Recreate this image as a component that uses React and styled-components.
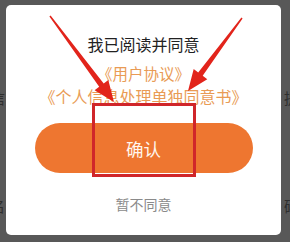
import React from "react";
import styled, { createGlobalStyle } from "styled-components";

const Global = createGlobalStyle`
  html, body { margin: 0; padding: 0; }
  body { width: 290px; height: 242px; overflow: hidden; background: #585858; }
  * { box-sizing: border-box; }
`;

const Screen = styled.div`
  position: relative;
  width: 290px;
  height: 242px;
  background: #585858;
  font-family: "Noto Sans CJK SC", "Noto Sans", sans-serif;
  overflow: hidden;
`;

const BehindRow = styled.div`
  display: flex;
  justify-content: space-between;
  margin-top: ${(p) => p.$top}px;
  font-size: 15px;
  line-height: 20px;
  color: #2e2e2e;
`;

const BehindText = styled.span`
  margin-left: ${(p) => p.$ml || 0}px;
  margin-right: ${(p) => p.$mr || 0}px;
`;

const Dialog = styled.div`
  position: absolute;
  left: 6px;
  top: 5px;
  width: 275px;
  height: 230px;
  background: #fff;
  border-radius: 5px;
  display: flex;
  flex-direction: column;
  align-items: center;
  padding-top: 28px;
`;

const Title = styled.div`
  font-size: 16px;
  line-height: 22px;
  color: #222;
`;

const Link = styled.div`
  font-size: ${(p) => p.$size}px;
  line-height: 22px;
  color: #e99b55;
  margin-top: ${(p) => p.$mt}px;
`;

const ConfirmButton = styled.button`
  margin-top: 16px;
  width: 218px;
  height: 50px;
  border: none;
  border-radius: 25px;
  background: #ee7630;
  color: #fff6ee;
  font-family: inherit;
  font-size: 17.5px;
  padding: 0;
`;

const Decline = styled.div`
  margin-top: 21px;
  font-size: 14px;
  line-height: 20px;
  color: #8a8a8a;
`;

const Annotation = styled.svg`
  position: absolute;
  left: 0;
  top: 0;
  pointer-events: none;
`;

function arrowPoints([tx, ty], [hx, hy], headLen, headHalf, tailW, shaftW) {
  const dx = hx - tx;
  const dy = hy - ty;
  const len = Math.hypot(dx, dy);
  const ux = dx / len;
  const uy = dy / len;
  const nx = -uy;
  const ny = ux;
  const bx = hx - ux * headLen;
  const by = hy - uy * headLen;
  const pts = [
    [tx + nx * tailW, ty + ny * tailW],
    [bx + nx * shaftW, by + ny * shaftW],
    [bx + nx * headHalf, by + ny * headHalf],
    [hx, hy],
    [bx - nx * headHalf, by - ny * headHalf],
    [bx - nx * shaftW, by - ny * shaftW],
    [tx - nx * tailW, ty - ny * tailW],
  ];
  return pts.map((p) => p.map((v) => v.toFixed(1)).join(",")).join(" ");
}

export default function App() {
  return (
    <Screen>
      <Global />
      <BehindRow $top={88}>
        <BehindText $ml={-10}>信</BehindText>
        <BehindText $mr={-9}>提</BehindText>
      </BehindRow>
      <BehindRow $top={88}>
        <BehindText $ml={-10}>名</BehindText>
        <BehindText $mr={-9}>码</BehindText>
      </BehindRow>
      <Dialog>
        <Title>我已阅读并同意</Title>
        <Link $size={15.5} $mt={7}>《用户协议》</Link>
        <Link $size={16} $mt={1}>《个人信息处理单独同意书》</Link>
        <ConfirmButton>确认</ConfirmButton>
        <Decline>暂不同意</Decline>
      </Dialog>
      <Annotation width="290" height="242" viewBox="0 0 290 242">
        <polygon
          points={arrowPoints([50, 16], [114, 102], 21, 8.5, 0.8, 2.8)}
          fill="#e2241b"
        />
        <polygon
          points={arrowPoints([242, 18], [188, 91], 21, 8.5, 0.8, 2.8)}
          fill="#e2241b"
        />
        <rect
          x="93.5"
          y="104.5"
          width="101"
          height="71"
          fill="none"
          stroke="#d0262a"
          strokeWidth="3"
        />
      </Annotation>
    </Screen>
  );
}
